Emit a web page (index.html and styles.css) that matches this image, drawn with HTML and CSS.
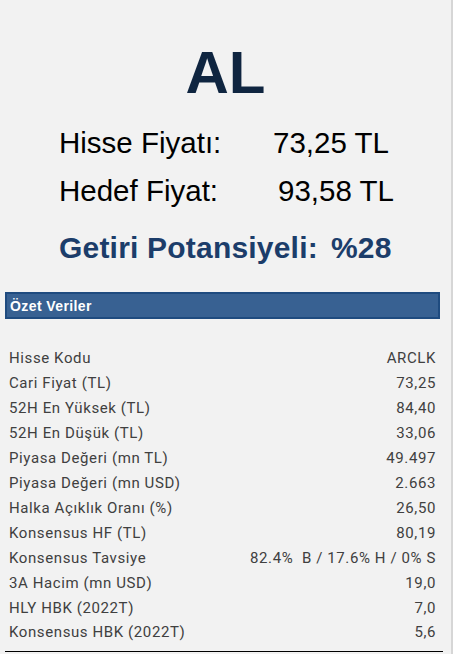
FILE: index.html
```html
<!DOCTYPE html>
<html lang="tr">
<head>
    <meta charset="UTF-8">
    <meta name="viewport" content="width=device-width, initial-scale=1.0">
    <title>ARCLK - Özet</title>
    <link rel="stylesheet" href="styles.css">
</head>
<body>
    <div class="page">
        <div class="summary">
            <h1 class="signal">AL</h1>
            <div class="price-grid">
                <span class="price-label">Hisse Fiyatı:</span>
                <span class="price-value">73,25 TL</span>
                <span class="price-label">Hedef Fiyat:</span>
                <span class="price-value shift">93,58 TL</span>
            </div>
            <p class="potential">Getiri Potansiyeli:<span class="potential-value">%28</span></p>
        </div>

        <div class="data-section">
            <div class="section-bar">Özet Veriler</div>
            <table class="data-table">
                <tr><td>Hisse Kodu</td><td>ARCLK</td></tr>
                <tr><td>Cari Fiyat (TL)</td><td>73,25</td></tr>
                <tr><td>52H En Yüksek (TL)</td><td>84,40</td></tr>
                <tr><td>52H En Düşük (TL)</td><td>33,06</td></tr>
                <tr><td>Piyasa Değeri (mn TL)</td><td>49.497</td></tr>
                <tr><td>Piyasa Değeri (mn USD)</td><td>2.663</td></tr>
                <tr><td>Halka Açıklık Oranı (%)</td><td>26,50</td></tr>
                <tr><td>Konsensus HF (TL)</td><td>80,19</td></tr>
                <tr><td>Konsensus Tavsiye</td><td>82.4%&nbsp; B / 17.6% H / 0% S</td></tr>
                <tr><td>3A Hacim (mn USD)</td><td>19,0</td></tr>
                <tr><td>HLY HBK (2022T)</td><td>7,0</td></tr>
                <tr><td>Konsensus HBK (2022T)</td><td>5,6</td></tr>
            </table>
        </div>
    </div>
</body>
</html>
```

FILE: styles.css
```css
* {
    margin: 0;
    padding: 0;
    box-sizing: border-box;
}

body {
    background: #f2f2f2;
    font-family: 'Liberation Sans', Arial, sans-serif;
    color: #000;
}

.page {
    width: 453px;
    height: 654px;
    border-right: 2px solid #d6d6d6;
    overflow: hidden;
}

.summary {
    padding: 38px 0 0 59px;
}

.signal {
    margin-left: -59px;
    text-align: center;
    font-size: 60px;
    font-weight: bold;
    line-height: 69px;
    color: #0f2540;
}

.price-grid {
    display: grid;
    grid-template-columns: 214px auto;
    margin-top: 12px;
    font-size: 29.5px;
    line-height: 48px;
}

.price-value.shift {
    padding-left: 5px;
}

.potential {
    margin-top: 9px;
    font-size: 30px;
    font-weight: bold;
    letter-spacing: 0.2px;
    line-height: 48px;
    color: #1c3d6a;
}

.potential-value {
    margin-left: 13px;
}

.data-section {
    margin: 20px 8px 0 5px;
}

.section-bar {
    width: 435px;
    height: 27px;
    padding: 4px 0 0 3px;
    background: #386192;
    border: 2px solid #1f4b7f;
    color: #fff;
    font-size: 14px;
    font-weight: bold;
    letter-spacing: 0.4px;
}

.data-table {
    width: 438px;
    margin-top: 26px;
    border-collapse: collapse;
    border-bottom: 1px solid #000;
    font-family: Roboto, 'Liberation Sans', sans-serif;
    font-size: 15px;
    letter-spacing: 0.6px;
    color: #404040;
}

.data-table td {
    height: 25px;
    padding: 0 0 0 4px;
    white-space: nowrap;
}

.data-table td:last-child {
    text-align: right;
    padding: 0 7px 0 0;
}

.data-table tr:last-child td {
    height: 31px;
    padding-bottom: 6px;
}
```
